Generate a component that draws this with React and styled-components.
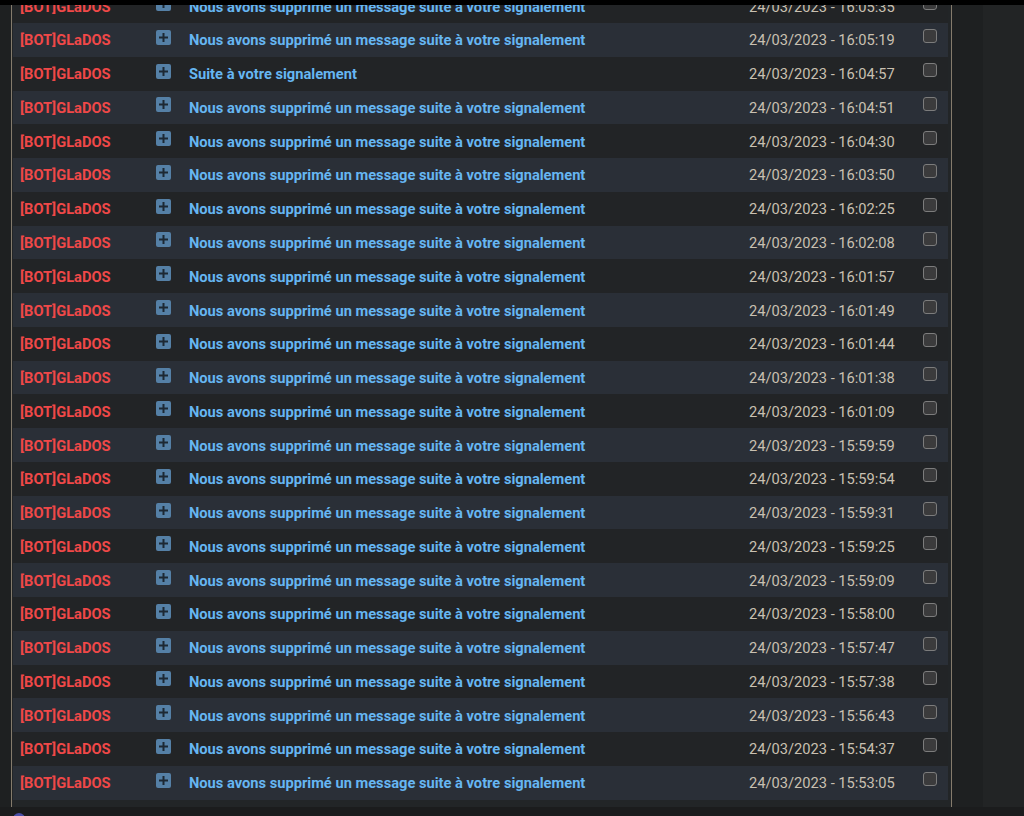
import React from "react";
import styled, { createGlobalStyle } from "styled-components";

const Global = createGlobalStyle`
  html, body { margin: 0; padding: 0; background: #1e2021; overflow: hidden; }
  body { font-family: Roboto, "Liberation Sans", sans-serif; }
`;

const TopBar = styled.div`
  position: fixed;
  top: 0; left: 0; right: 0;
  height: 5px;
  background: #000;
  z-index: 5;
`;

const Page = styled.div`
  display: flex;
  flex-direction: column;
  height: 816px;
`;

const Main = styled.div`
  display: flex;
  align-items: stretch;
  margin-top: -10.78px;
`;

const Gutter = styled.div`
  width: 11px;
  flex: none;
`;

const Frame = styled.div`
  width: 937px;
  flex: none;
  border-left: 1px solid #857b6c;
  border-right: 1px solid #857b6c;
  background: #222527;
  padding: 0 1px 7px 1px;
  box-sizing: content-box;
`;

const Spacer = styled.div`
  width: 31px;
  flex: none;
`;

const SidePanel = styled.div`
  flex: 1;
  background: #222425;
`;

const Table = styled.div`
  display: grid;
  grid-template-columns: 135px 34px 560px 174px 32px;
  grid-auto-rows: 33.78px;
`;

const Row = styled.div`
  display: contents;
  & > * { background: ${(p) => (p.$alt ? "#2a2f37" : "#222426")}; }
`;

const Cell = styled.div`
  display: flex;
  align-items: center;
  padding-left: 7px;
  white-space: nowrap;
  overflow: hidden;
  font-size: 14.67px;
`;

const User = styled(Cell)`
  color: #f04848;
  font-weight: 700;
  padding-top: 1px;
`;

const Title = styled(Cell)`
  color: #66b6f2;
  font-weight: 700;
  padding-top: 1px;
`;

const DateCell = styled(Cell)`
  color: #c9c0b1;
  padding-top: 1px;
`;

const IconCell = styled(Cell)`
  padding-left: 8px;
  padding-bottom: 5px;
`;

const CheckCell = styled(Cell)`
  padding-left: 7px;
  padding-bottom: 7px;
`;

const Check = styled.span`
  width: 12px;
  height: 12px;
  border: 1px solid #7c7c7c;
  border-radius: 3px;
  background: #3b3b3c;
  display: block;
`;

const Bottom = styled.div`
  flex: 1;
  background: #1b1c1d;
  position: relative;
`;

const Dot = styled.span`
  position: absolute;
  left: 13px;
  top: 6px;
  width: 12px;
  height: 12px;
  border-radius: 50%;
  background: #4a4fa8;
`;

const PlusIcon = () => (
  <svg width="15" height="15" viewBox="0 0 15 15">
    <rect x="0" y="0" width="15" height="15" rx="2" fill="#5580a6" />
    <path d="M7.5 3v9M3 7.5h9" stroke="#1d2833" strokeWidth="2" />
  </svg>
);

const LONG = "Nous avons supprimé un message suite à votre signalement";
const rows = [
  ["16:05:35", LONG],
  ["16:05:19", LONG],
  ["16:04:57", "Suite à votre signalement"],
  ["16:04:51", LONG],
  ["16:04:30", LONG],
  ["16:03:50", LONG],
  ["16:02:25", LONG],
  ["16:02:08", LONG],
  ["16:01:57", LONG],
  ["16:01:49", LONG],
  ["16:01:44", LONG],
  ["16:01:38", LONG],
  ["16:01:09", LONG],
  ["15:59:59", LONG],
  ["15:59:54", LONG],
  ["15:59:31", LONG],
  ["15:59:25", LONG],
  ["15:59:09", LONG],
  ["15:58:00", LONG],
  ["15:57:47", LONG],
  ["15:57:38", LONG],
  ["15:56:43", LONG],
  ["15:54:37", LONG],
  ["15:53:05", LONG],
];

export default function App() {
  return (
    <>
      <Global />
      <TopBar />
      <Page>
        <Main>
          <Gutter />
          <Frame>
            <Table>
              {rows.map(([t, title], i) => (
                <Row key={i} $alt={i % 2 === 1}>
                  <User>[BOT]GLaDOS</User>
                  <IconCell><PlusIcon /></IconCell>
                  <Title>{title}</Title>
                  <DateCell>24/03/2023 - {t}</DateCell>
                  <CheckCell><Check /></CheckCell>
                </Row>
              ))}
            </Table>
          </Frame>
          <Spacer />
          <SidePanel />
        </Main>
        <Bottom>
          <Dot />
        </Bottom>
      </Page>
    </>
  );
}
